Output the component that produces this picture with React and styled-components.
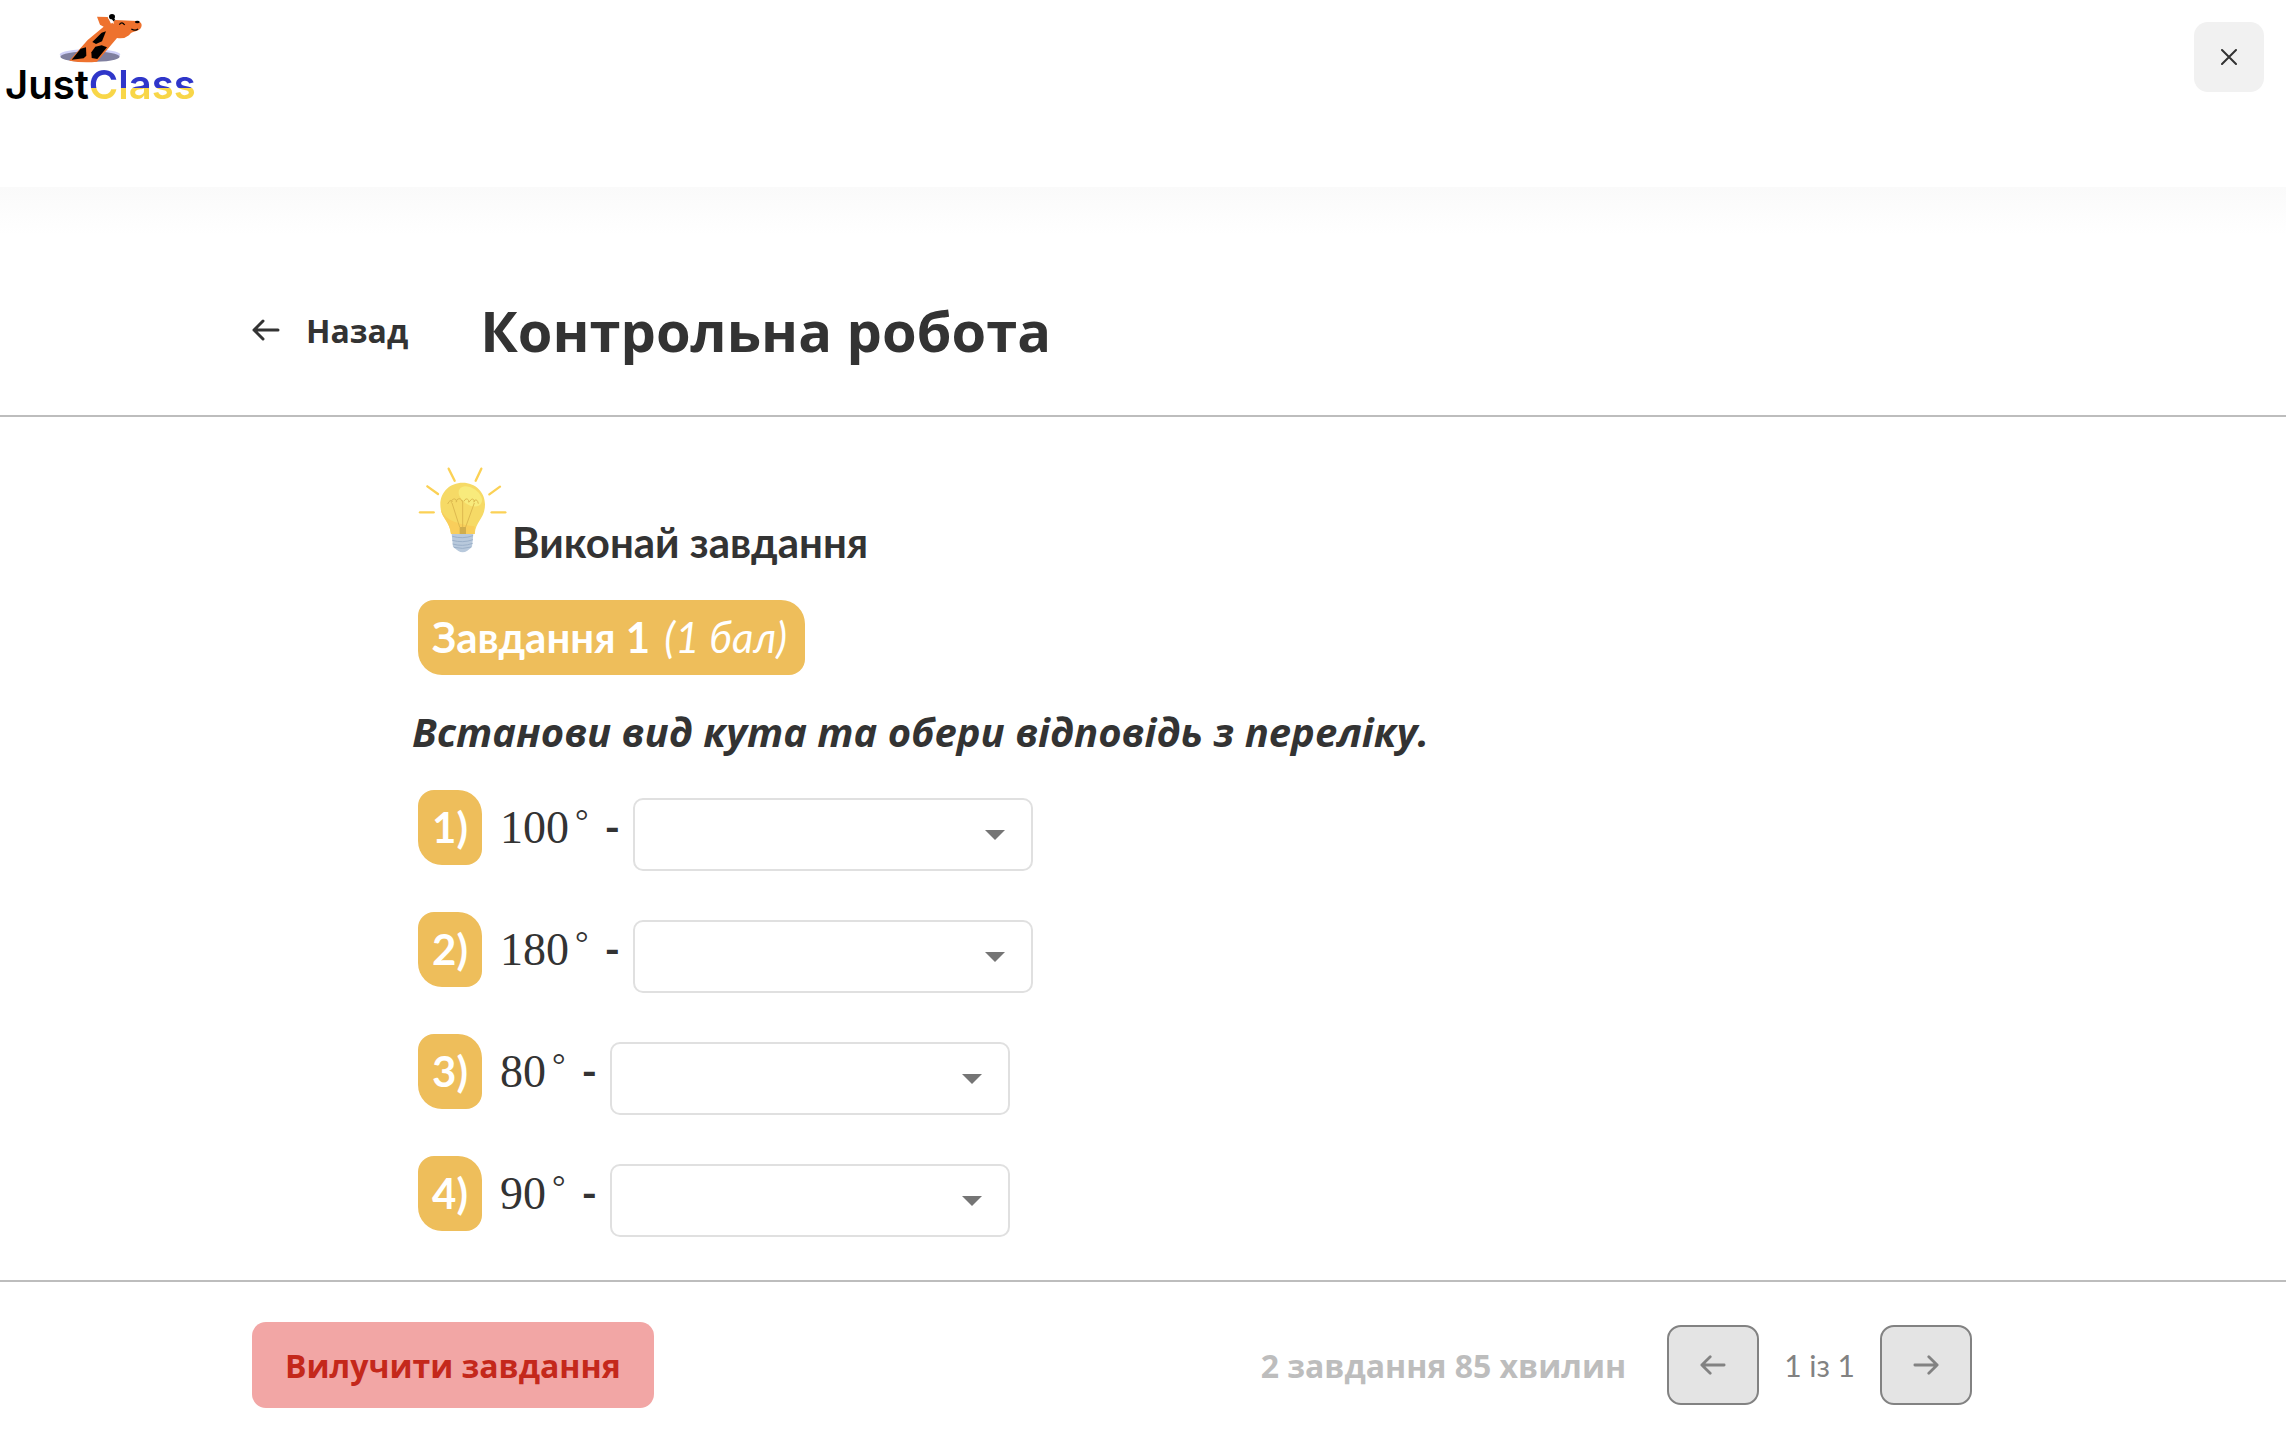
import React, { useState } from 'react';
import styled, { createGlobalStyle } from 'styled-components';

const GlobalStyle = createGlobalStyle`
  * {
    box-sizing: border-box;
  }

  body {
    margin: 0;
    background: #fff;
    color: #333;
    font-family: 'Open Sans', sans-serif;
  }

  button,
  select {
    font: inherit;
    color: inherit;
  }
`;

const Page = styled.div`
  display: flex;
  flex-direction: column;
  min-height: 100vh;
`;

const Header = styled.header`
  display: flex;
  justify-content: space-between;
  align-items: flex-start;
  height: 187px;
  padding: 13px 22px 0 5px;
`;

const Logo = styled.a`
  display: flex;
  flex-direction: column;
  gap: 1px;
  color: #000;
  font-family: Inter, sans-serif;
  font-size: 40px;
  font-weight: 600;
  line-height: 40px;
  text-decoration: none;

  svg {
    margin-left: 52px;
  }

  b {
    font-weight: 600;
    color: transparent;
    background: linear-gradient(#2f36c9 28px, #f8d648 28px);
    background-clip: text;
  }
`;

const CloseButton = styled.button`
  display: flex;
  align-items: center;
  justify-content: center;
  width: 70px;
  height: 70px;
  margin-top: 9px;
  border: none;
  border-radius: 14px;
  background: #f1f1f1;
  cursor: pointer;
`;

const TitleBar = styled.div`
  display: flex;
  align-items: center;
  height: 230px;
  padding: 58px 252px 0;
  gap: 72px;
  border-bottom: 2px solid #bdbdbd;
  background: linear-gradient(#fafafa, #fff 48px);
`;

const BackButton = styled.button`
  display: flex;
  align-items: center;
  gap: 26px;
  padding: 0;
  border: none;
  background: none;
  font-size: 32px;
  font-weight: 700;
  cursor: pointer;
`;

const Title = styled.h1`
  margin: 0;
  font-size: 56px;
  font-weight: 700;
  line-height: 68px;
`;

const Main = styled.main`
  flex: 1;
  padding: 50px 412px 40px;
  font-family: Lato, 'Open Sans', sans-serif;
  font-size: 42px;
  font-weight: 700;
  line-height: 48px;
`;

const Hint = styled.h2`
  display: flex;
  align-items: flex-end;
  gap: 4px;
  height: 99px;
  margin: 0 0 34px 6px;
  font: inherit;

  svg {
    align-self: flex-start;
  }
`;

const Badge = styled.span`
  display: inline-block;
  height: 75px;
  margin-left: 6px;
  padding: 0 14px;
  border-radius: 16px 24px 16px 24px;
  background: #eebe5b;
  color: #fff;
  line-height: 75px;

  em {
    margin: 0 4px;
    font-weight: 400;
  }
`;

const Question = styled.p`
  margin: 33px 0 34px;
  font-family: 'Open Sans', sans-serif;
  font-size: 40px;
  font-style: italic;
`;

const Answers = styled.ol`
  display: flex;
  flex-direction: column;
  gap: 41px;
  margin: 0;
  padding: 0;
  list-style: none;
`;

const Answer = styled.li`
  display: flex;
  align-items: flex-end;
  height: 81px;
  gap: 13px;

  label {
    display: flex;
    align-self: flex-start;
    line-height: 75px;
  }
`;

const Angle = styled.span`
  margin: 0 16px 0 18px;
  font-family: 'Liberation Serif', serif;
  font-size: 46px;
  font-weight: 400;
`;

const Degree = styled.span`
  margin-left: 6px;
  font-size: 34px;
  line-height: 0;
  vertical-align: 11px;
`;

const SelectBox = styled.div`
  display: grid;
  align-items: center;
  width: 400px;

  select,
  svg {
    grid-area: 1 / 1;
  }

  svg {
    justify-self: end;
    margin-right: 28px;
    pointer-events: none;
  }
`;

const Select = styled.select`
  width: 100%;
  height: 73px;
  padding: 0 60px 0 20px;
  border: 2px solid #e0e0e0;
  border-radius: 10px;
  background: #fff;
  font-size: 32px;
  font-weight: 400;
  appearance: none;
`;

const Footer = styled.footer`
  display: flex;
  align-items: center;
  justify-content: space-between;
  height: 158px;
  padding: 40px 314px 30px 252px;
  border-top: 2px solid #bdbdbd;
  font-size: 32px;
`;

const RemoveButton = styled.button`
  height: 86px;
  padding: 0 33px;
  border: none;
  border-radius: 14px;
  background: #f2a6a5;
  color: #c4281b;
  font-weight: 700;
  cursor: pointer;
`;

const Pager = styled.div`
  display: flex;
  align-items: center;
  gap: 25px;
  color: #828282;
`;

const Summary = styled.span`
  margin-right: 16px;
  color: #bdbdbd;
  font-weight: 700;
`;

const PageNumber = styled.span`
  font-family: Lato, sans-serif;
  font-size: 30px;
`;

const PageButton = styled.button`
  display: flex;
  align-items: center;
  justify-content: center;
  width: 92px;
  height: 80px;
  border: 2px solid #828282;
  border-radius: 14px;
  background: #e4e4e4;
  cursor: pointer;
`;

const Giraffe = () => (
  <svg width="87" height="51" viewBox="170 40 261 153" aria-hidden="true">
    <ellipse cx="269" cy="165" rx="91" ry="17" fill="#cfd0f8" />
    <ellipse cx="269" cy="171" rx="89" ry="16" fill="#7f7f9f" />
    <path
      d="M207 183 L262 121 L310 81 L299 75 L290 51 L322 52 L332 72 L345 61 L410 64 Q424 67 424 76 Q424 89 408 94 Q392 97 386 107 Q372 119 350 115 L290 186 Q250 191 207 183 Z"
      fill="#ee722e"
    />
    <path d="M324 53 L340 71" stroke="#fff" strokeWidth="4" />
    <path d="M335 53 L342 63" stroke="#000" strokeWidth="7" />
    <ellipse cx="335" cy="51" rx="9" ry="8" fill="#000" />
    <path d="M304 99 L317 95 L305 125 L287 133 L276 127 Z" fill="#000" />
    <path d="M241 147 L257 143 L258 168 L250 176 L214 180 Z" fill="#000" />
    <path d="M285 141 L304 137 L320 143 L291 178 L274 175 L273 158 Z" fill="#000" />
    <path d="M357 75 Q365 64 373 76" fill="none" stroke="#000" strokeWidth="4" />
    <path d="M393 88 Q405 95 413 88" fill="none" stroke="#000" strokeWidth="4" />
    <ellipse cx="411" cy="67" rx="7" ry="4" fill="#000" />
  </svg>
);

const Bulb = () => (
  <svg width="90" height="86" viewBox="52 50 270 258" aria-hidden="true">
    <g stroke="#fbd155" strokeWidth="7" strokeLinecap="round">
      <path d="M144 55 L162 91" />
      <path d="M242 55 L225 91" />
      <path d="M80 108 L112 131" />
      <path d="M298 109 L266 132" />
      <path d="M58 186 H99" />
      <path d="M273 186 H314" />
    </g>
    <path
      d="M119 162 C119 125 148 97 186 97 C224 97 253 125 253 162 C253 205 226 210 222 251 H151 C147 210 119 205 119 162 Z"
      fill="#f6da66"
    />
    <path d="M120 176 C130 202 155 220 222 228 V251 H151 C147 212 124 204 120 176 Z" fill="#f9ce5b" />
    <ellipse cx="209" cy="138" rx="39" ry="25" transform="rotate(35 209 138)" fill="#f8eb7c" />
    <path
      d="M177 230 L154 158 M186 230 V150 M195 230 L221 158 M141 161 Q149 144 155 154 Q149 160 153 150 Q164 140 168 153 Q164 160 169 148 Q180 140 184 153 M190 153 Q196 140 204 150 Q202 160 208 152 Q216 140 221 152 Q218 160 222 150 Q230 145 233 160"
      fill="none"
      stroke="#ddb94f"
      strokeWidth="3"
    />
    <path d="M177 230 H196 V251 H177 Z" fill="#d0ad4c" />
    <path d="M153 251 H218 L214 290 L200 301 Q186 310 172 301 L157 290 Z" fill="#b8c9dc" />
    <path
      d="M155 258 Q186 267 217 256 M155 270 Q186 279 217 268 M156 281 Q186 290 216 279 M160 291 Q186 298 211 290"
      fill="none"
      stroke="#9bb0c9"
      strokeWidth="3"
    />
  </svg>
);

const Arrow = ({ right, small }) => (
  <svg width={small ? 26 : 28} height="24" viewBox="0 0 28 24" aria-hidden="true">
    <path
      d={right ? 'M2 12 H26 M17 3 L26 12 L17 21' : 'M26 12 H2 M11 3 L2 12 L11 21'}
      fill="none"
      stroke="currentColor"
      strokeWidth="3"
      strokeLinecap="round"
      strokeLinejoin="round"
    />
  </svg>
);

const angles = [100, 180, 80, 90];
const options = ['гострий', 'прямий', 'тупий', 'розгорнутий'];

const AngleAnswer = ({ number, angle }) => {
  const [value, setValue] = useState('');
  const id = `angle-${number}`;

  return (
    <Answer>
      <label htmlFor={id}>
        <Badge>{number})</Badge>
        <Angle>
          {angle}
          <Degree>°</Degree>
        </Angle>
        -
      </label>
      <SelectBox>
        <Select id={id} value={value} onChange={e => setValue(e.target.value)}>
          <option value="" />
          {options.map(option => (
            <option key={option}>{option}</option>
          ))}
        </Select>
        <svg width="20" height="10" viewBox="0 0 20 10" aria-hidden="true">
          <path d="M0 0 H20 L10 10 Z" fill="#757575" />
        </svg>
      </SelectBox>
    </Answer>
  );
};

const App = () => (
  <Page>
    <GlobalStyle />
    <Header>
      <Logo href="/">
        <Giraffe />
        <span>
          Just<b>Class</b>
        </span>
      </Logo>
      <CloseButton aria-label="Закрити">
        <svg width="16" height="16" viewBox="0 0 16 16" aria-hidden="true">
          <path d="M1 1 L15 15 M15 1 L1 15" stroke="#333" strokeWidth="2" strokeLinecap="round" />
        </svg>
      </CloseButton>
    </Header>
    <TitleBar>
      <BackButton>
        <Arrow />
        Назад
      </BackButton>
      <Title>Контрольна робота</Title>
    </TitleBar>
    <Main>
      <Hint>
        <Bulb />
        Виконай завдання
      </Hint>
      <Badge>
        Завдання 1 <em>(1 бал)</em>
      </Badge>
      <Question>Встанови вид кута та обери відповідь з переліку.</Question>
      <Answers>
        {angles.map((angle, i) => (
          <AngleAnswer key={angle} number={i + 1} angle={angle} />
        ))}
      </Answers>
    </Main>
    <Footer>
      <RemoveButton>Вилучити завдання</RemoveButton>
      <Pager>
        <Summary>2 завдання 85 хвилин</Summary>
        <PageButton aria-label="Попереднє">
          <Arrow small />
        </PageButton>
        <PageNumber>1 із 1</PageNumber>
        <PageButton aria-label="Наступне">
          <Arrow right small />
        </PageButton>
      </Pager>
    </Footer>
  </Page>
);

export default App;
